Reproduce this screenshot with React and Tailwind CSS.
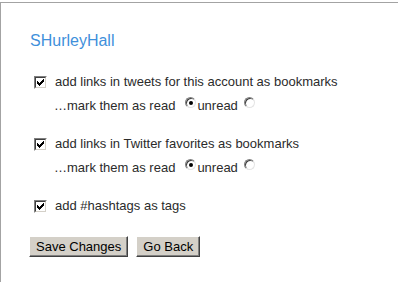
import React from 'react';

const Checkbox = () => (
  <span className="inline-block w-[13px] h-[13px] border border-t-[#808080] border-l-[#808080] border-r-white border-b-white shrink-0">
    <span className="block w-[11px] h-[11px] border border-t-[#404040] border-l-[#404040] border-r-[#d4d0c8] border-b-[#d4d0c8] bg-white">
      <svg width="9" height="9" viewBox="0 0 9 9" shapeRendering="crispEdges" className="block">
        <rect x="7" y="1" width="1" height="1" fill="#000" />
        <rect x="6" y="2" width="2" height="1" fill="#000" />
        <rect x="1" y="3" width="1" height="1" fill="#000" />
        <rect x="5" y="3" width="3" height="1" fill="#000" />
        <rect x="1" y="4" width="2" height="1" fill="#000" />
        <rect x="4" y="4" width="3" height="1" fill="#000" />
        <rect x="1" y="5" width="5" height="1" fill="#000" />
        <rect x="2" y="6" width="3" height="1" fill="#000" />
        <rect x="3" y="7" width="1" height="1" fill="#000" />
      </svg>
    </span>
  </span>
);

const Radio = ({ checked, className }) => (
  <span
    className={`inline-flex items-center justify-center w-[11px] h-[11px] rounded-full border border-t-[#808080] border-l-[#808080] border-r-[#e4e4e4] border-b-[#e4e4e4] shadow-[inset_1px_1px_0_#404040] bg-white shrink-0 self-start mt-[3px] ${className}`}
  >
    {checked && <span className="block w-[4px] h-[4px] rounded-full bg-black" />}
  </span>
);

const Option = ({ label, withRead }) => (
  <div>
    <label className="flex items-center h-[24px] pl-[4px] gap-[8px]">
      <Checkbox />
      <span>{label}</span>
    </label>
    {withRead && (
      <div className="flex items-center h-[24px] pl-[24px]">
        <span>…mark them as read</span>
        <Radio checked className="ml-[10px]" />
        <span className="ml-[1px]">unread</span>
        <Radio className="ml-[6px]" />
      </div>
    )}
  </div>
);

const Button = ({ children }) => (
  <button className="h-[21px] px-[6px] bg-[#d4d0c8] text-black text-[13px] leading-none border border-t-white border-l-white border-r-[#404040] border-b-[#404040] shadow-[inset_-1px_-1px_0_#808080]">
    {children}
  </button>
);

export default function App() {
  return (
    <div className="w-[398px] h-[282px] bg-white pt-[2px] font-['Liberation_Sans',Arial,sans-serif] text-[13px] text-[#2b2b2b]">
      <div className="h-[280px] border-t border-l border-[#a3a3a3] pl-[29px] pt-[28px]">
        <h2 className="text-[16px] leading-[20px] text-[#3f90db]">SHurleyHall</h2>

        <div className="mt-[19px] flex flex-col gap-[14px]">
          <Option label="add links in tweets for this account as bookmarks" withRead />
          <Option label="add links in Twitter favorites as bookmarks" withRead />
          <Option label="add #hashtags as tags" />
        </div>

        <div className="mt-[18px] -ml-[1px] flex gap-[8px]">
          <Button>Save Changes</Button>
          <Button>Go Back</Button>
        </div>
      </div>
    </div>
  );
}
